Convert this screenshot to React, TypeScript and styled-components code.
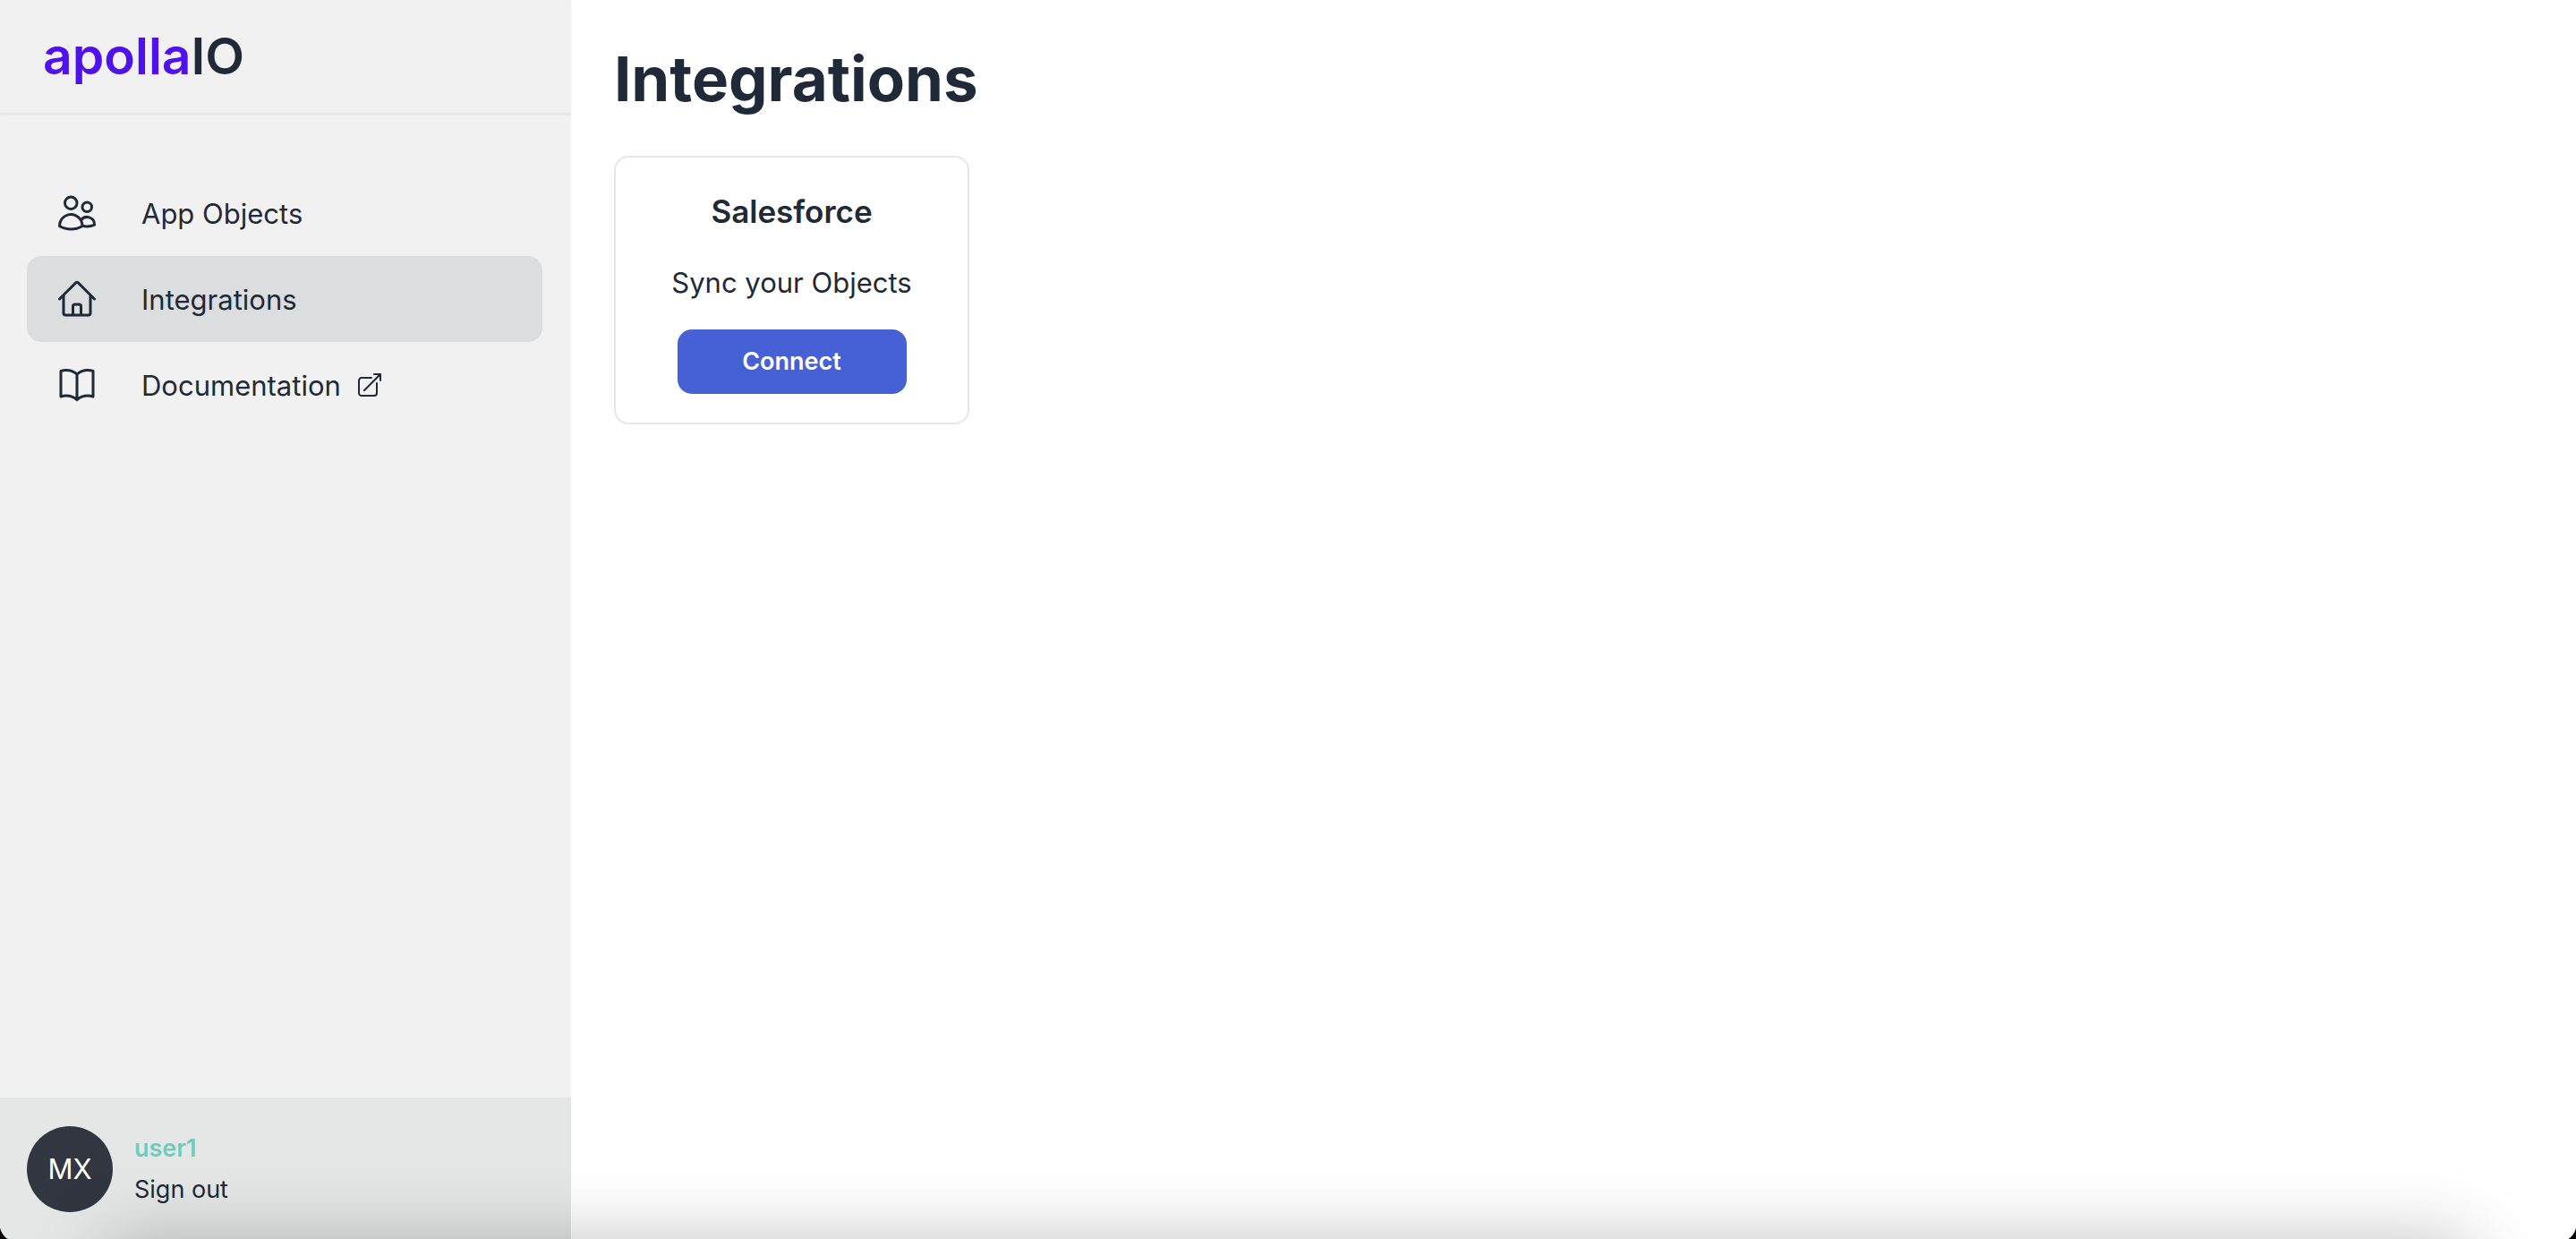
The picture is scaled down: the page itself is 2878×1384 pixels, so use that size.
import React from "react";
import styled, { createGlobalStyle, css } from "styled-components";
import {
  HiOutlineArrowTopRightOnSquare,
  HiOutlineBookOpen,
  HiOutlineHome,
  HiOutlineUsers,
} from "react-icons/hi2";

const colors = {
  ink: "#1f2937",
  brand: "#4f12ee",
  accent: "#4661d5",
  mint: "#6bcdbd",
};

const GlobalStyle = createGlobalStyle`
  *, *::before, *::after { box-sizing: border-box; }
  body {
    margin: 0;
    background: #fff;
    color: ${colors.ink};
    font-family: Inter, "Liberation Sans", sans-serif;
    font-size: 31px;
    line-height: 48px;
    overflow: hidden;
  }
  h1, h2, p, ul { margin: 0; padding: 0; }
`;

const Layout = styled.div`
  position: relative;
  display: flex;
  min-height: 100vh;
  overflow: hidden;
`;

const Sidebar = styled.aside`
  display: flex;
  flex-direction: column;
  flex: 0 0 638px;
  background: #f1f1f1;
`;

const Brand = styled.header`
  display: flex;
  align-items: center;
  height: 128px;
  padding: 0 48px;
  border-bottom: 2px solid #e7e7e7;
  box-shadow: 0 1px 2px rgba(0, 0, 0, 0.03);
`;

const Logo = styled.a`
  color: ${colors.ink};
  font-size: 57px;
  font-weight: 600;
  line-height: 72px;
  text-decoration: none;
`;

const LogoMark = styled.span`
  color: ${colors.brand};
`;

const Nav = styled.nav`
  flex: 1;
  padding: 62px 32px 0 30px;
`;

const NavList = styled.ul`
  list-style: none;
`;

const NavLink = styled.a<{ $active?: boolean }>`
  display: flex;
  align-items: center;
  height: 96px;
  padding: 0 32px;
  border-radius: 16px;
  color: inherit;
  text-decoration: none;

  > svg:first-child {
    width: 48px;
    height: 48px;
    margin-right: 48px;
  }

  > svg:last-child {
    width: 32px;
    height: 32px;
    margin-left: 16px;
  }

  ${({ $active }) =>
    $active &&
    css`
      background: #dcdddf;
    `}
`;

const NavLabel = styled.span`
  padding-top: 2px;
`;

const Account = styled.footer`
  display: flex;
  align-items: center;
  gap: 24px;
  padding: 32px 30px 30px;
  background: #e4e7e6;
`;

const Avatar = styled.div`
  display: grid;
  place-items: center;
  width: 96px;
  height: 96px;
  border-radius: 50%;
  background: #323640;
  color: #fff;
`;

const AccountDetails = styled.div`
  display: flex;
  flex-direction: column;
  align-items: flex-start;
  font-size: 27px;
  line-height: 46px;
`;

const UserName = styled.span`
  color: ${colors.mint};
  font-weight: 600;
`;

const SignOut = styled.button`
  padding: 0;
  border: 0;
  background: none;
  color: inherit;
  font: inherit;
  cursor: pointer;
`;

const Main = styled.main`
  flex: 1;
  padding: 48px;
`;

const PageTitle = styled.h1`
  margin-bottom: 46px;
  font-size: 69px;
  font-weight: 700;
  line-height: 80px;
`;

const CardGrid = styled.div`
  display: flex;
  flex-wrap: wrap;
  gap: 48px;
`;

const Card = styled.section`
  display: flex;
  flex-direction: column;
  align-items: center;
  gap: 28px;
  width: 397px;
  padding: 32px;
  border: 2px solid #e5e7eb;
  border-radius: 16px;
`;

const CardTitle = styled.h2`
  font-size: 35px;
  font-weight: 600;
  line-height: 56px;
`;

const ConnectButton = styled.button`
  width: 256px;
  height: 72px;
  border: 0;
  border-radius: 16px;
  background: ${colors.accent};
  color: #fff;
  font: inherit;
  font-size: 27px;
  font-weight: 600;
  cursor: pointer;
`;

/* Soft shade rising from below the window's lower edge. */
const BottomShade = styled.div`
  position: absolute;
  top: calc(100% + 6px);
  left: 120px;
  right: 120px;
  height: 300px;
  box-shadow: 0 0 80px rgba(0, 0, 0, 0.27);
  pointer-events: none;
`;

const Corner = styled.div<{ $side: "left" | "right" }>`
  position: absolute;
  bottom: 0;
  ${({ $side }) => $side}: 0;
  width: 20px;
  height: 20px;
  background: radial-gradient(
    circle at ${({ $side }) => ($side === "left" ? "20px" : "0")} 3px,
    transparent 20px,
    #000 21px
  );
  pointer-events: none;
`;

const links = [
  { label: "App Objects", icon: HiOutlineUsers },
  { label: "Integrations", icon: HiOutlineHome, active: true },
  { label: "Documentation", icon: HiOutlineBookOpen, external: true },
];

export default function App() {
  return (
    <>
      <GlobalStyle />
      <Layout>
        <Sidebar>
          <Brand>
            <Logo href="#">
              <LogoMark>apolla</LogoMark>IO
            </Logo>
          </Brand>
          <Nav>
            <NavList>
              {links.map(({ label, icon: Icon, active, external }) => (
                <li key={label}>
                  <NavLink
                    href="#"
                    $active={active}
                    aria-current={active ? "page" : undefined}
                  >
                    <Icon aria-hidden />
                    <NavLabel>{label}</NavLabel>
                    {external && <HiOutlineArrowTopRightOnSquare aria-hidden />}
                  </NavLink>
                </li>
              ))}
            </NavList>
          </Nav>
          <Account>
            <Avatar>MX</Avatar>
            <AccountDetails>
              <UserName>user1</UserName>
              <SignOut type="button">Sign out</SignOut>
            </AccountDetails>
          </Account>
        </Sidebar>
        <Main>
          <PageTitle>Integrations</PageTitle>
          <CardGrid>
            <Card>
              <CardTitle>Salesforce</CardTitle>
              <p>Sync your Objects</p>
              <ConnectButton type="button">Connect</ConnectButton>
            </Card>
          </CardGrid>
        </Main>
        <BottomShade />
        <Corner $side="left" />
        <Corner $side="right" />
      </Layout>
    </>
  );
}
